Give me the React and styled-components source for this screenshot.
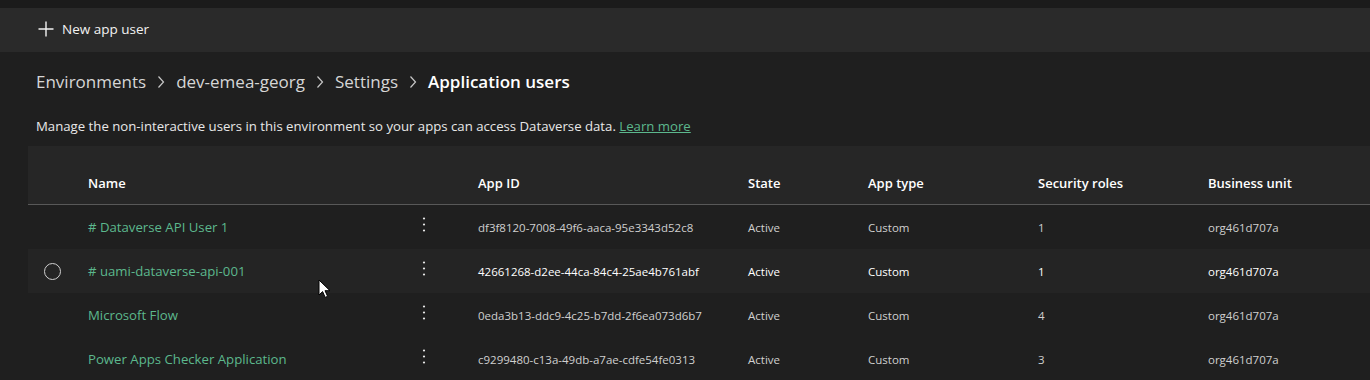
import React from 'react'
import styled, { createGlobalStyle } from 'styled-components'

const GlobalStyle = createGlobalStyle`
  html, body {
    margin: 0;
    padding: 0;
    background: #1f1f1f;
    font-family: "Open Sans", "Noto Sans", sans-serif;
    overflow: hidden;
  }
`

const users = [
  { name: '# Dataverse API User 1', appId: 'df3f8120-7008-49f6-aaca-95e3343d52c8', roles: 1 },
  { name: '# uami-dataverse-api-001', appId: '42661268-d2ee-44ca-84c4-25ae4b761abf', roles: 1, hover: true },
  { name: 'Microsoft Flow', appId: '0eda3b13-ddc9-4c25-b7dd-2f6ea073d6b7', roles: 4 },
  { name: 'Power Apps Checker Application', appId: 'c9299480-c13a-49db-a7ae-cdfe54fe0313', roles: 3 },
]

const columns = '48px 390px 270px 120px 170px 170px 1fr'

export default function App() {
  return (
    <Page>
      <GlobalStyle />
      <TopStrip />
      <Toolbar>
        <ToolButton>
          <svg width="16" height="16" viewBox="0 0 16 16">
            <path d="M8 0.5v15M0.5 8h15" stroke="#f2f2f2" strokeWidth="1.4" fill="none" />
          </svg>
          New app user
        </ToolButton>
      </Toolbar>

      <Content>
        <Breadcrumb>
          <Crumb>Environments</Crumb>
          <Chevron />
          <Crumb>dev-emea-georg</Crumb>
          <Chevron />
          <Crumb>Settings</Crumb>
          <Chevron />
          <Crumb current>Application users</Crumb>
        </Breadcrumb>

        <Description>
          Manage the non-interactive users in this environment so your apps can access Dataverse data.{' '}
          <Link href="#">Learn more</Link>
        </Description>

        <Table>
          <HeaderRow>
            <span />
            <HeaderCell>Name</HeaderCell>
            <HeaderCell>App ID</HeaderCell>
            <HeaderCell>State</HeaderCell>
            <HeaderCell>App type</HeaderCell>
            <HeaderCell>Security roles</HeaderCell>
            <HeaderCell>Business unit</HeaderCell>
          </HeaderRow>

          {users.map((u) => (
            <Row key={u.appId} hover={u.hover}>
              <CheckCell>{u.hover && <Radio />}</CheckCell>
              <NameCell>
                <NameLink>{u.name}</NameLink>
                <MoreButton>
                  <svg width="4" height="16" viewBox="0 0 4 16">
                    <circle cx="2" cy="2.5" r="1.1" fill="#e8e8e8" />
                    <circle cx="2" cy="8.5" r="1.1" fill="#e8e8e8" />
                    <circle cx="2" cy="14.5" r="1.1" fill="#e8e8e8" />
                  </svg>
                </MoreButton>
                {u.hover && <Cursor />}
              </NameCell>
              <Cell hover={u.hover}>{u.appId}</Cell>
              <Cell hover={u.hover}>Active</Cell>
              <Cell hover={u.hover}>Custom</Cell>
              <Cell hover={u.hover}>{u.roles}</Cell>
              <Cell hover={u.hover}>org461d707a</Cell>
            </Row>
          ))}
        </Table>
      </Content>
    </Page>
  )
}

function Chevron() {
  return (
    <ChevronIcon width="8" height="14" viewBox="0 0 8 14">
      <path d="M1.5 1.5l5 5.5-5 5.5" stroke="#c8c8c8" strokeWidth="1.2" fill="none" />
    </ChevronIcon>
  )
}

function Cursor() {
  return (
    <CursorIcon width="14" height="20" viewBox="0 0 14 20">
      <path
        d="M1 1v15l3.6-3.4 2.6 5.8 2.4-1.1-2.6-5.6H12z"
        fill="#fff"
        stroke="#000"
        strokeWidth="1"
        strokeLinejoin="round"
      />
    </CursorIcon>
  )
}

const Page = styled.div`
  width: 1370px;
  height: 380px;
  background: #1f1f1f;
  color: #e6e6e6;
  overflow: hidden;
`

const TopStrip = styled.div`
  height: 8px;
  background: #1b1b1b;
`

const Toolbar = styled.div`
  height: 44px;
  background: #2a2a2a;
  display: flex;
  align-items: center;
  padding-left: 38px;
`

const ToolButton = styled.div`
  display: flex;
  align-items: center;
  gap: 8px;
  font-size: 13.5px;
  color: #f2f2f2;
  margin-top: -2px;
`

const Content = styled.div`
  padding: 14px 0 0 28px;
`

const Breadcrumb = styled.div`
  display: flex;
  align-items: center;
  gap: 11px;
  height: 30px;
  padding-left: 8px;
`

const Crumb = styled.span`
  font-size: 17px;
  font-weight: ${(p) => (p.current ? 600 : 400)};
  color: ${(p) => (p.current ? '#ffffff' : '#d6d6d6')};
`

const ChevronIcon = styled.svg`
  margin-top: 1px;
`

const Description = styled.div`
  margin-top: 20px;
  padding-left: 8px;
  font-size: 13.2px;
  color: #e8e8e8;
  height: 20px;
  line-height: 20px;
`

const Link = styled.a`
  color: #5cb88d;
  text-decoration: underline;
`

const Table = styled.div`
  margin-top: 10px;
`

const HeaderRow = styled.div`
  display: grid;
  grid-template-columns: ${columns};
  align-items: center;
  background: #262626;
  height: 59px;
  padding-top: 16px;
  box-sizing: border-box;
  border-bottom: 1px solid #585858;
`

const HeaderCell = styled.div`
  padding-left: 12px;
  font-size: 13px;
  font-weight: 600;
  color: #ffffff;
`

const Row = styled.div`
  display: grid;
  grid-template-columns: ${columns};
  align-items: center;
  height: 44px;
  background: ${(p) => (p.hover ? '#242424' : 'transparent')};
`

const CheckCell = styled.div`
  display: flex;
  justify-content: center;
`

const Radio = styled.span`
  width: 15px;
  height: 15px;
  border: 1.5px solid #d0d0d0;
  border-radius: 50%;
`

const NameCell = styled.div`
  position: relative;
  display: flex;
  align-items: center;
  justify-content: space-between;
  padding: 0 30px 0 12px;
`

const NameLink = styled.span`
  font-size: 13.2px;
  color: #5cb88d;
`

const MoreButton = styled.span`
  width: 24px;
  display: flex;
  justify-content: center;
  margin-top: -6px;
`

const CursorIcon = styled.svg`
  position: absolute;
  left: 242px;
  top: 17px;
`

const Cell = styled.div`
  padding-left: 12px;
  font-size: 11.5px;
  color: ${(p) => (p.hover ? '#ffffff' : '#cfcfcf')};
`
